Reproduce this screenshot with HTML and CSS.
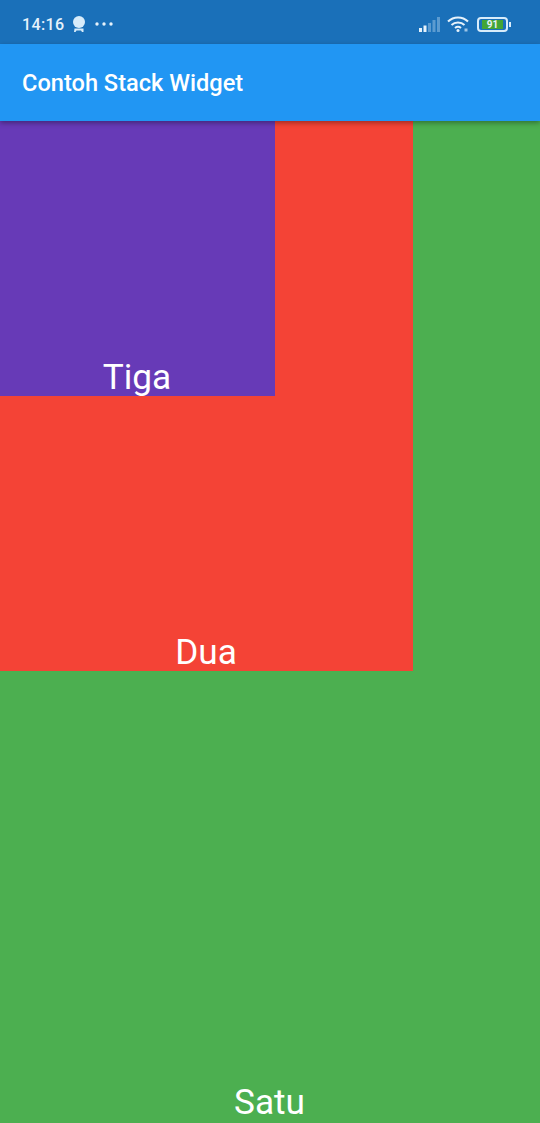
FILE: index.html
```html
<!DOCTYPE html>
<html lang="en">
<head>
    <meta charset="UTF-8">
    <meta name="viewport" content="width=device-width, initial-scale=1.0">
    <title>Contoh Stack Widget</title>
    <link rel="stylesheet" href="styles.css">
</head>
<body>
    <div class="phone">
        <div class="status-bar">
            <div class="status-left">
                <span class="time">14:16</span>
                <svg class="icon-bot" width="14" height="16" viewBox="0 0 14 16">
                    <circle cx="7" cy="6" r="6" fill="#d8ecfa"/>
                    <path d="M2.500 12.500h9v3.500h-1.500l-1-1.500h-4.500l-1 1.500h-1.500z" fill="#d8ecfa"/>
                </svg>
                <svg class="icon-dots" width="18" height="4" viewBox="0 0 18 4">
                    <circle cx="2" cy="2" r="1.700" fill="#e6f2fb"/>
                    <circle cx="9" cy="2" r="1.700" fill="#e6f2fb"/>
                    <circle cx="16" cy="2" r="1.700" fill="#e6f2fb"/>
                </svg>
            </div>
            <div class="status-right">
                <svg class="icon-signal" width="21" height="15" viewBox="0 0 21 15">
                    <rect x="0" y="11" width="3" height="4" fill="#e6f2fb"/>
                    <rect x="4.500" y="8.500" width="3" height="6.500" fill="#e6f2fb"/>
                    <rect x="9" y="6" width="3" height="9" fill="#5c9bd0"/>
                    <rect x="13.500" y="3" width="3" height="12" fill="#5c9bd0"/>
                    <rect x="18" y="0" width="3" height="15" fill="#5c9bd0"/>
                </svg>
                <svg class="icon-wifi" width="22" height="16" viewBox="0 0 22 16">
                    <path d="M1 5.500c5.500-5.500 14.500-5.500 20 0" fill="none" stroke="#e6f2fb" stroke-width="2"/>
                    <path d="M4.500 9c3.500-3.300 9.500-3.300 13 0" fill="none" stroke="#e6f2fb" stroke-width="2"/>
                    <path d="M8 12c1.700-1.400 4.300-1.400 6 0" fill="none" stroke="#e6f2fb" stroke-width="2"/>
                    <circle cx="11" cy="14.500" r="1.500" fill="#e6f2fb"/>
                    <rect x="17.500" y="12.500" width="3" height="3" fill="#9cc4e6"/>
                </svg>
                <div class="battery">
                    <div class="battery-body"><span class="battery-level">91</span></div>
                    <div class="battery-tip"></div>
                </div>
            </div>
        </div>
        <div class="app-bar">Contoh Stack Widget</div>
        <div class="box box-green">
            <div class="box box-red">
                <div class="box box-purple">
                    <span class="label">Tiga</span>
                </div>
                <span class="label">Dua</span>
            </div>
            <span class="label label-last">Satu</span>
        </div>
    </div>
</body>
</html>
```

FILE: styles.css
```css
html, body {
    margin: 0;
    padding: 0;
}
.phone {
    display: flex;
    flex-direction: column;
    width: 540px;
    height: 1123px;
    overflow: hidden;
    font-family: Roboto, "Liberation Sans", sans-serif;
    color: #fff;
}
.status-bar {
    flex: 0 0 44px;
    display: flex;
    justify-content: space-between;
    align-items: center;
    box-sizing: border-box;
    padding: 4px 29px 0 22px;
    background-color: #1a70b9;
}
.status-left, .status-right {
    display: flex;
    align-items: center;
}
.time {
    font-size: 16px;
    font-weight: 500;
    letter-spacing: 0.4px;
    color: #e6f2fb;
}
.icon-bot {
    margin-left: 7px;
}
.icon-dots {
    margin-left: 9px;
}
.icon-wifi {
    margin-left: 7px;
}
.battery {
    display: flex;
    align-items: center;
    margin-left: 8px;
}
.battery-body {
    display: flex;
    align-items: center;
    box-sizing: border-box;
    width: 31px;
    height: 15px;
    padding: 0 3px;
    border: 2px solid #d8ecfa;
    border-radius: 4px;
}
.battery-level {
    flex: 0 0 21px;
    height: 9px;
    background-color: #43a536;
    font-size: 10px;
    font-weight: 700;
    line-height: 9px;
    text-align: center;
    color: #e6f2fb;
}
.battery-tip {
    width: 2px;
    height: 5px;
    margin-left: 1px;
    background-color: #d8ecfa;
}
.app-bar {
    flex: 0 0 77px;
    position: relative;
    z-index: 1;
    display: flex;
    align-items: center;
    padding-left: 22px;
    box-sizing: border-box;
    background-color: #2196f3;
    box-shadow: 0 2px 5px rgba(0, 0, 0, 0.35);
    font-size: 23.600px;
    font-weight: 500;
}
.box {
    display: flex;
    flex-direction: column;
    align-items: center;
    justify-content: space-between;
}
.box-green {
    flex: 1;
    background-color: #4caf50;
}
.box-red {
    align-self: flex-start;
    width: 413px;
    height: 550px;
    background-color: #f44336;
}
.box-purple {
    align-self: flex-start;
    justify-content: flex-end;
    width: 275px;
    height: 275px;
    background-color: #673ab7;
}
.label {
    margin-right: 1px;
    font-size: 35.200px;
    line-height: 38px;
}
.label-last {
    line-height: 42px;
}
```
